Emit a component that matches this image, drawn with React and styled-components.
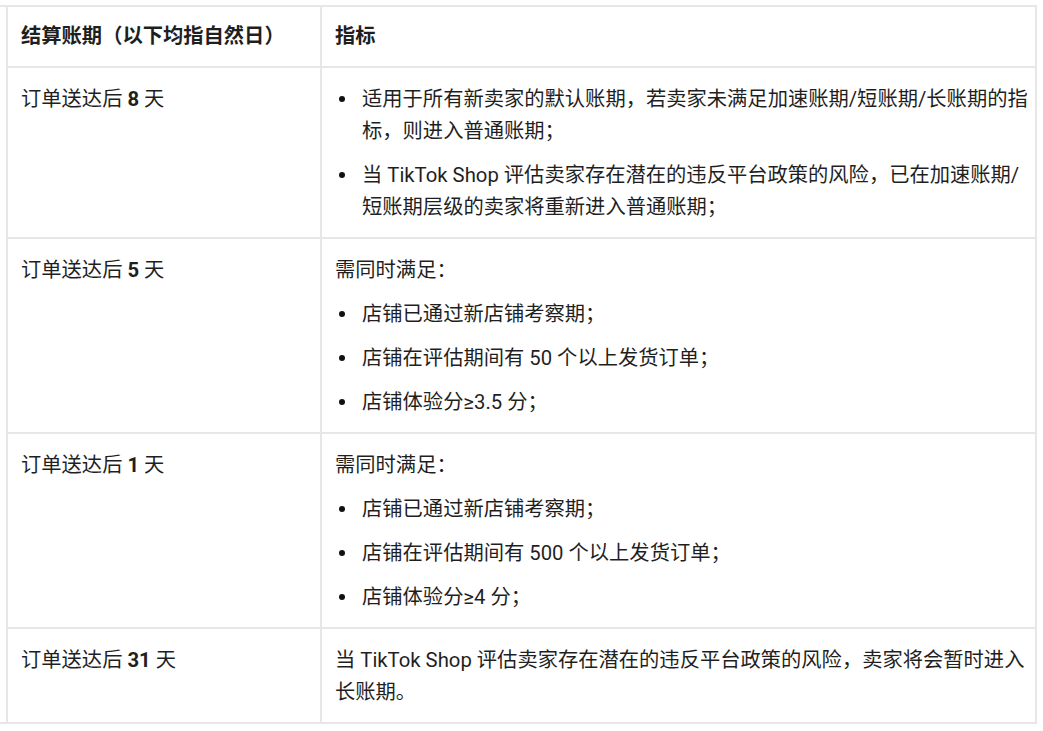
import React from "react";
import styled, { createGlobalStyle } from "styled-components";

const Global = createGlobalStyle`
  html, body { margin: 0; padding: 0; background: #ffffff; }
  body {
    font-family: "Roboto", "Noto Sans CJK SC", "Noto Sans", sans-serif;
    color: #1f1f1f;
    -webkit-font-smoothing: antialiased;
  }
`;

const Frame = styled.div`
  width: 1037px;
  margin-top: 5px;
  border-top: 2px solid #e7e7e7;
  border-bottom: 2px solid #e7e7e7;
`;

const Table = styled.div`
  margin-left: 6px;
  width: 1031px;
  border-left: 2px solid #e7e7e7;
  box-sizing: border-box;
  display: grid;
  grid-template-columns: 314px 715px;
`;

const Cell = styled.div`
  box-sizing: border-box;
  border-right: 2px solid #e7e7e7;
  border-top: ${(p) => (p.$first ? "none" : "2px solid #e7e7e7")};
  padding: ${(p) => (p.$head ? "13px 4px 14px 13px" : "15px 4px 14px 13px")};
  font-size: 20.3px;
  line-height: 32px;
  font-weight: ${(p) => (p.$head ? 600 : 400)};
  display: flex;
  flex-direction: column;
  gap: 12px;
`;

const Strong = styled.b`
  font-weight: 700;
`;

const Para = styled.div`
  margin: 0;
`;

const List = styled.ul`
  margin: 0;
  padding: 0;
  list-style: none;
  display: flex;
  flex-direction: column;
  gap: 12px;
`;

const Item = styled.li`
  display: flex;
  align-items: flex-start;
`;

const Bullet = styled.span`
  flex: 0 0 27px;
  height: 32px;
  display: flex;
  align-items: center;
  &::before {
    content: "";
    width: 6px;
    height: 6px;
    margin-left: 4px;
    border-radius: 50%;
    background: #111111;
  }
`;

const ItemText = styled.span`
  flex: 1;
`;

const Bul = ({ children }) => (
  <Item>
    <Bullet />
    <ItemText>{children}</ItemText>
  </Item>
);

const rows = [
  {
    days: "8",
    content: (
      <List>
        <Bul>适用于所有新卖家的默认账期，若卖家未满足加速账期/短账期/长账期的指标，则进入普通账期；</Bul>
        <Bul>当 TikTok Shop 评估卖家存在潜在的违反平台政策的风险，已在加速账期/短账期层级的卖家将重新进入普通账期；</Bul>
      </List>
    ),
  },
  {
    days: "5",
    content: (
      <>
        <Para>需同时满足：</Para>
        <List>
          <Bul>店铺已通过新店铺考察期；</Bul>
          <Bul>店铺在评估期间有 50 个以上发货订单；</Bul>
          <Bul>店铺体验分≥3.5 分；</Bul>
        </List>
      </>
    ),
  },
  {
    days: "1",
    content: (
      <>
        <Para>需同时满足：</Para>
        <List>
          <Bul>店铺已通过新店铺考察期；</Bul>
          <Bul>店铺在评估期间有 500 个以上发货订单；</Bul>
          <Bul>店铺体验分≥4 分；</Bul>
        </List>
      </>
    ),
  },
  {
    days: "31",
    content: <Para>当 TikTok Shop 评估卖家存在潜在的违反平台政策的风险，卖家将会暂时进入长账期。</Para>,
  },
];

export default function App() {
  return (
    <>
      <Global />
      <Frame>
        <Table>
          <Cell $head $first>结算账期（以下均指自然日）</Cell>
          <Cell $head $first>指标</Cell>
          {rows.map((r) => (
            <React.Fragment key={r.days}>
              <Cell>
                <Para>
                  订单送达后 <Strong>{r.days}</Strong> 天
                </Para>
              </Cell>
              <Cell>{r.content}</Cell>
            </React.Fragment>
          ))}
        </Table>
      </Frame>
    </>
  );
}
